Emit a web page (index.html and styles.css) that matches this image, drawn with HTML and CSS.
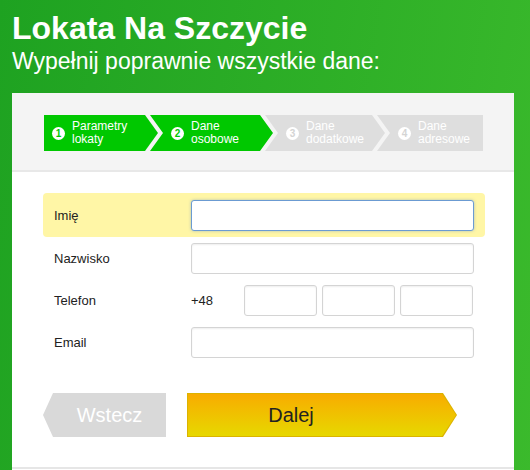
FILE: index.html
```html
<!DOCTYPE html>
<html lang="pl">
<head>
  <meta charset="UTF-8">
  <meta name="viewport" content="width=device-width, initial-scale=1.0">
  <title>Lokata Na Szczycie</title>
  <link rel="stylesheet" href="styles.css">
</head>
<body>
  <div class="header">
    <h1 class="title">Lokata Na Szczycie</h1>
    <p class="subtitle">Wypełnij poprawnie wszystkie dane:</p>
  </div>

  <div class="panel">
    <div class="steps-bar">
      <div class="steps">
        <div class="step step-1 done"><span class="num">1</span><span class="step-text">Parametry<br>lokaty</span></div>
        <div class="step step-2 done"><span class="num">2</span><span class="step-text">Dane<br>osobowe</span></div>
        <div class="step step-3"><span class="num">3</span><span class="step-text">Dane<br>dodatkowe</span></div>
        <div class="step step-4"><span class="num">4</span><span class="step-text">Dane<br>adresowe</span></div>
      </div>
    </div>

    <form class="form">
      <div class="row active">
        <label class="label" for="imie">Imię</label>
        <input class="field focus" type="text" id="imie" autofocus>
      </div>
      <div class="row">
        <label class="label" for="nazwisko">Nazwisko</label>
        <input class="field" type="text" id="nazwisko">
      </div>
      <div class="row">
        <label class="label" for="tel1">Telefon</label>
        <span class="prefix">+48</span>
        <div class="phone">
          <input class="field" type="text" id="tel1">
          <input class="field" type="text">
          <input class="field" type="text">
        </div>
      </div>
      <div class="row">
        <label class="label" for="email">Email</label>
        <input class="field" type="text" id="email">
      </div>

      <div class="actions">
        <button type="button" class="btn-back">Wstecz</button>
        <div class="btn-next-wrap">
          <button type="button" class="btn-next">Dalej</button>
        </div>
      </div>
    </form>

    <div class="panel-foot"></div>
  </div>
</body>
</html>
```

FILE: styles.css
```css
body {
  margin: 0;
  font-family: "Liberation Sans", Arial, sans-serif;
  background: linear-gradient(100deg, #1ea221, #3bba2c);
  min-height: 100vh;
  overflow: hidden;
}

.header {
  padding: 10px 12px 0;
  color: #fff;
}

.title {
  margin: 0;
  font-size: 32px;
  line-height: 36px;
  font-weight: bold;
}

.subtitle {
  margin: 2px 0 0;
  font-size: 23px;
  line-height: 26px;
}

.panel {
  margin: 19px 16px 0 12px;
  background-color: #fff;
}

/* pasek krokow */
.steps-bar {
  background-color: #f4f4f4;
  border-bottom: 2px solid #e8e8e8;
  padding: 22px 31px 19px 32px;
}

.steps {
  display: flex;
}

.step {
  height: 36px;
  display: flex;
  align-items: center;
  padding-left: 21px;
  margin-left: -8px;
  box-sizing: border-box;
  background-color: #dedede;
  color: #fff;
  clip-path: polygon(0 0, calc(100% - 13px) 0, 100% 50%, calc(100% - 13px) 100%, 0 100%, 13px 50%);
}

.step.done {
  background-color: #00c800;
}

.step-1 {
  width: 114px;
  margin-left: 0;
  padding-left: 8px;
  clip-path: polygon(0 0, calc(100% - 13px) 0, 100% 50%, calc(100% - 13px) 100%, 0 100%);
}

.step-2 { width: 123px; }
.step-3 { width: 120px; }

.step-4 {
  width: 106px;
  clip-path: polygon(0 0, 100% 0, 100% 100%, 0 100%, 13px 50%);
}

.num {
  width: 13px;
  height: 13px;
  border-radius: 50%;
  background-color: #fff;
  color: #d4d4d4;
  font-size: 10px;
  font-weight: bold;
  line-height: 13px;
  text-align: center;
  flex-shrink: 0;
  margin-right: 7px;
}

.step.done .num {
  color: #00c800;
}

.step-text {
  font-size: 12px;
  line-height: 13px;
}

/* formularz */
.form {
  padding: 21px 29px 0 31px;
}

.row {
  display: flex;
  align-items: center;
  height: 42px;
  padding: 0 11px;
}

.row.active {
  height: 44px;
  background-color: #fff6a6;
  border-radius: 4px;
}

.label {
  width: 137px;
  font-size: 13px;
  color: #222;
}

.prefix {
  width: 53px;
  font-size: 13px;
  color: #222;
}

.field {
  height: 31px;
  box-sizing: border-box;
  width: 283px;
  border: 1px solid #d4d4d4;
  border-radius: 3px;
  box-shadow: inset 0 1px 2px rgba(0, 0, 0, 0.07);
  padding: 0 5px;
  font-family: inherit;
  font-size: 13px;
  outline: none;
}

.field.focus {
  border-color: #6b9bd2;
  box-shadow: 0 0 3px rgba(90, 140, 210, 0.5);
}

.phone {
  display: flex;
  gap: 5px;
}

.phone .field {
  width: 73px;
}

/* przyciski */
.actions {
  display: flex;
  gap: 21px;
  margin-top: 30px;
}

.btn-back {
  width: 123px;
  height: 44px;
  border: none;
  padding: 0 0 0 10px;
  background-color: #d9d9d9;
  color: #fff;
  font-family: inherit;
  font-size: 20px;
  clip-path: polygon(10px 0, 100% 0, 100% 100%, 10px 100%, 0 50%);
}

.btn-next-wrap {
  width: 270px;
  height: 44px;
  padding: 1px;
  box-sizing: border-box;
  background-color: #dcb300;
  clip-path: polygon(0 0, calc(100% - 14px) 0, 100% 50%, calc(100% - 14px) 100%, 0 100%);
}

.btn-next {
  width: 100%;
  height: 100%;
  border: none;
  padding: 0 62px 0 0;
  background: linear-gradient(to bottom, #f8ac00, #e7d800);
  color: #222;
  font-family: inherit;
  font-size: 20px;
  clip-path: polygon(0 0, calc(100% - 14px) 0, 100% 50%, calc(100% - 14px) 100%, 0 100%);
}

.panel-foot {
  margin-top: 30px;
  border-top: 2px solid #e6e6e6;
  height: 40px;
}
```
